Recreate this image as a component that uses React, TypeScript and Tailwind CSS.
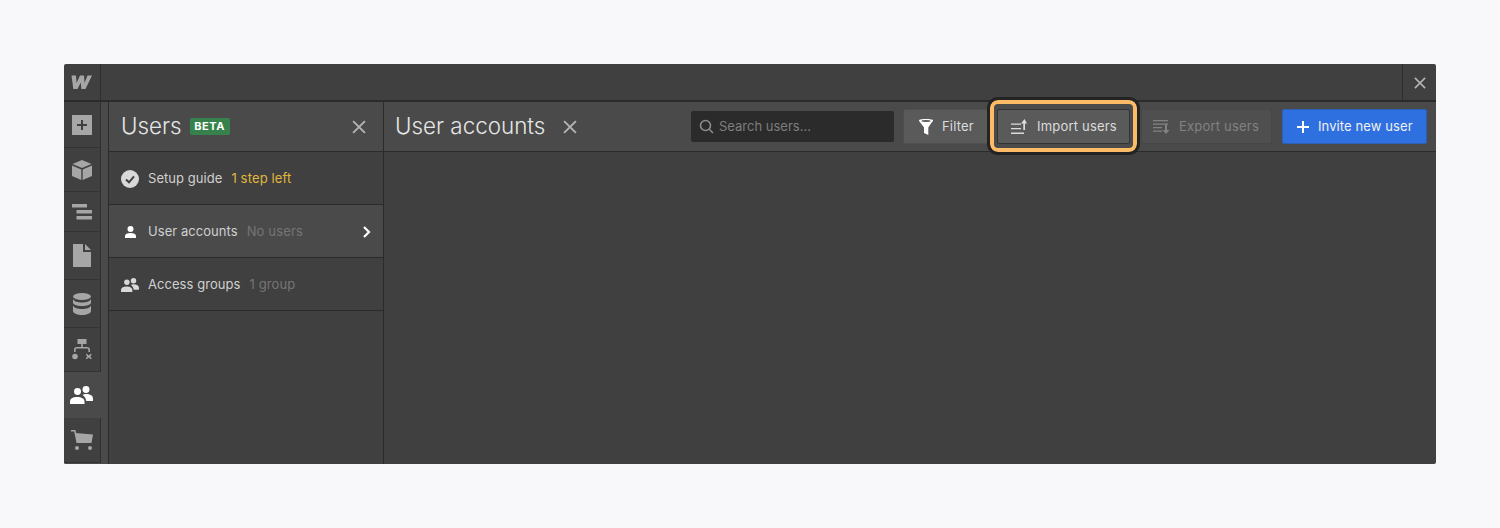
import React from 'react';

const railItems = [
  { h: 'h-[46px]', icon: <PlusBox /> },
  { h: 'h-[44px]', icon: <Cube /> },
  { h: 'h-[40px]', icon: <Navigator /> },
  { h: 'h-[48px]', icon: <Page /> },
  { h: 'h-[48px]', icon: <Database /> },
  { h: 'h-[44px]', icon: <Logic /> },
  { h: 'h-[46px]', icon: <People color="#ffffff" />, active: true },
  { h: 'h-[45px]', icon: <Cart /> },
];

function PlusBox() {
  return (
    <svg width="20" height="20" viewBox="0 0 20 20">
      <path fill="#a6a6a6" d="M0 0h20v20H0z M9 5v4H5v2h4v4h2v-4h4V9h-4V5z" fillRule="evenodd" />
    </svg>
  );
}

function Cube() {
  return (
    <svg width="22" height="22" viewBox="0 0 22 22" fill="#a6a6a6">
      <path d="M11 1l9.500 4-9.500 4-9.500-4z" />
      <path d="M1 6.500l9.300 4V21L1 17z" />
      <path d="M21 6.500l-9.300 4V21l9.300-4z" />
    </svg>
  );
}

function Navigator() {
  return (
    <svg width="20" height="16" viewBox="0 0 20 16" fill="#a6a6a6">
      <path d="M0 0h15v3.500H0z" />
      <path d="M4.500 6h15.500v3.500H4.500z" />
      <path d="M4.500 12h15.500v3.500H4.500z" />
    </svg>
  );
}

function Page() {
  return (
    <svg width="18" height="23" viewBox="0 0 18 23" fill="#a6a6a6">
      <path d="M0 0h10v8h8v15H0z" />
      <path d="M12 0l6 6h-6z" />
    </svg>
  );
}

function Database() {
  return (
    <svg width="18" height="22" viewBox="0 0 18 22" fill="#a6a6a6">
      <ellipse cx="9" cy="3.500" rx="9" ry="3.500" />
      <path d="M0 6c1 2.500 4.500 3.500 9 3.500S17 8.500 18 6v3.500c0 2-4 3.500-9 3.500S0 11.500 0 9.500z" />
      <path d="M0 12.500c1 2.500 4.500 3.500 9 3.500s8-1 9-3.500V18c0 2.200-4 4-9 4s-9-1.800-9-4z" />
    </svg>
  );
}

function Logic() {
  return (
    <svg width="20" height="22" viewBox="0 0 20 22" fill="#a6a6a6">
      <path d="M5.500 0h9v5h-9z" />
      <path d="M9.200 5h1.600v3H15c2 0 3 1.200 3 3v2h-1.600v-2c0-1-.5-1.500-1.500-1.500H5.100c-1 0-1.500.5-1.500 1.500v2H2v-2c0-1.800 1-3 3-3h4.200z" />
      <circle cx="3" cy="17.500" r="2.800" />
      <path d="M14.800 14.800l2 1.600 2-1.600 1 1-1.600 1.700 1.600 1.700-1 1-2-1.600-2 1.600-1-1 1.600-1.700-1.600-1.700z" />
    </svg>
  );
}

function People({ color, size = 23 }: { color: string; size?: number }) {
  return (
    <svg width={size} height={size * 0.78} viewBox="0 0 23 18" fill={color}>
      <circle cx="7.500" cy="5.500" r="3.500" />
      <path d="M0 18v-2.500c0-2.800 2.500-4.500 7-4.500s7.500 1.700 7.500 4.500V18z" />
      <circle cx="16" cy="3.500" r="3.500" />
      <path d="M12.500 9c1-.8 2.200-1 3.700-1 4 0 6.800 1.700 6.800 4.500V15h-6.700c-.4-2.600-1.800-4.700-3.800-6z" />
    </svg>
  );
}

function Cart() {
  return (
    <svg width="22" height="20" viewBox="0 0 22 20" fill="#a6a6a6">
      <path d="M0 0h4.500l2.500 13H5.500L3.200 1.500H0z" />
      <path d="M4.500 3L22 4.500 20.500 13H6.500z" />
      <circle cx="6" cy="18" r="2" />
      <circle cx="19" cy="18" r="2" />
    </svg>
  );
}

function CloseIcon({ size = 13, color = '#b3b3b3' }: { size?: number; color?: string }) {
  return (
    <svg width={size} height={size} viewBox="0 0 13 13" stroke={color} strokeWidth="1.800" fill="none">
      <path d="M1 1l11 11M12 1L1 12" />
    </svg>
  );
}

function Logo() {
  return (
    <svg width="21" height="14" viewBox="0 0 21 14" fill="#a6a6a6">
      <path d="M0.500 0.500H5L5.500 8 9 0.500h4L13.500 8 16.500 0.500H21L14.500 14H10.300L9.800 7.500 6.500 14H2.300z" />
    </svg>
  );
}

function SectionRow({
  icon,
  label,
  note,
  noteClass,
  active,
}: {
  icon: React.ReactNode;
  label: string;
  note: string;
  noteClass: string;
  active?: boolean;
}) {
  return (
    <div
      className={`h-[53px] flex items-center pt-[2px] pl-[12px] pr-[12px] border-b border-[#2b2b2b] ${
        active ? 'bg-[#4a4a4a]' : ''
      }`}
    >
      <div className="w-[18px] flex justify-center shrink-0">{icon}</div>
      <span className="ml-[9px] text-[13px] tracking-[0.05px] text-[#d0d0d0]">{label}</span>
      <span className={`ml-[9px] text-[13px] tracking-[0.15px] ${noteClass}`}>{note}</span>
      {active && (
        <svg className="ml-auto" width="9" height="12" viewBox="0 0 9 12" stroke="#ffffff" strokeWidth="2.200" fill="none">
          <path d="M2 1l5 5-5 5" />
        </svg>
      )}
    </div>
  );
}

export default function App() {
  return (
    <div className="w-[1500px] h-[528px] bg-[#f8f8fa] pt-[64px] px-[64px] font-['Inter',sans-serif] overflow-hidden">
      <div className="w-[1372px] h-[400px] bg-[#404040] rounded-[2px] flex flex-col overflow-hidden">
        {/* Top bar */}
        <div className="h-[38px] shrink-0 flex border-b-2 border-[#2b2b2b]">
          <div className="w-[37px] flex items-center justify-center pr-[1px] border-r border-[#2e2e2e]">
            <Logo />
          </div>
          <div className="flex-1" />
          <div className="w-[34px] flex items-center justify-center pt-[1px] pl-[1px] border-l border-[#2e2e2e]">
            <CloseIcon size={12} />
          </div>
        </div>

        <div className="flex-1 flex min-h-0">
          {/* Icon rail */}
          <div className="w-[45px] shrink-0 flex flex-col bg-[#4a4a4a] border-r border-[#2b2b2b]">
            {railItems.map((item, i) => (
              <div
                key={i}
                className={`${item.h} shrink-0 flex items-center justify-center ${
                  item.active
                    ? 'pr-[9px]'
                    : 'w-[37px] bg-[#404040] border-r border-b border-r-[#2e2e2e] border-b-[#333333]'
                }`}
              >
                {item.icon}
              </div>
            ))}
          </div>

          {/* Users panel */}
          <div className="w-[275px] shrink-0 flex flex-col border-r border-[#2b2b2b]">
            <div className="h-[50px] shrink-0 bg-[#4a4a4a] border-b border-[#2b2b2b] flex items-center pl-[12px] pr-[17px]">
              <span className="text-[22.4px] font-light text-[#e6e6e6] leading-none">Users</span>
              <span className="ml-[8px] w-[40px] h-[17px] rounded-[2px] bg-[#37824c] text-white text-[11px] font-bold tracking-[0.5px] flex items-center justify-center">
                BETA
              </span>
              <div className="ml-auto flex">
                <CloseIcon size={14} />
              </div>
            </div>
            <SectionRow
              icon={
                <svg width="18" height="18" viewBox="0 0 18 18">
                  <circle cx="9" cy="9" r="9" fill="#d9d9d9" />
                  <path d="M5 9.500l3 2.800 5-6" stroke="#404040" strokeWidth="2" fill="none" />
                </svg>
              }
              label="Setup guide"
              note="1 step left"
              noteClass="text-[#e0b73e]"
            />
            <SectionRow
              active
              icon={
                <svg width="11" height="12" viewBox="0 0 11 12" fill="#ffffff">
                  <circle cx="5.500" cy="3" r="3" />
                  <path d="M0 12V10c0-2 2.200-3 5.500-3S11 8 11 10v2z" />
                </svg>
              }
              label="User accounts"
              note="No users"
              noteClass="text-[#757575]"
            />
            <SectionRow
              icon={<People color="#d9d9d9" size={18} />}
              label="Access groups"
              note="1 group"
              noteClass="text-[#757575]"
            />
          </div>

          {/* Main */}
          <div className="flex-1 min-w-0 flex flex-col">
            <div className="h-[50px] shrink-0 bg-[#4a4a4a] border-b border-[#2b2b2b] flex items-center pl-[11px] pr-[9px]">
              <span className="text-[22.4px] font-light text-[#e6e6e6] leading-none">User accounts</span>
              <div className="ml-[18px] flex">
                <CloseIcon size={14} />
              </div>

              <div className="ml-auto w-[203px] h-[31px] rounded-[2px] bg-[#2b2b2b] flex items-center pl-[8px]">
                <svg width="15" height="15" viewBox="0 0 15 15" stroke="#8c8c8c" strokeWidth="1.600" fill="none">
                  <circle cx="6.500" cy="6.500" r="5" />
                  <path d="M10 10l4 4" />
                </svg>
                <span className="ml-[5px] text-[13px] text-[#7d7d7d]">Search users...</span>
              </div>

              <button className="ml-[9px] w-[85px] h-[35px] rounded-[2px] bg-[#5a5a5a] border border-[#4f4f4f] flex items-center pl-[15px] text-[13px] tracking-[0.2px] text-[#dcdcdc]">
                <svg width="14" height="16" viewBox="0 0 14 16" fill="#ffffff">
                  <path d="M0 1.500C0 .5 3 0 7 0s7 .5 7 1.500c0 1-1 1.500-2 3L9.300 8.500V16L5 14V8.500L2 4.500C1 3 0 2.500 0 1.500z" />
                  <ellipse cx="7" cy="2" rx="4.500" ry="0.900" fill="#5a5a5a" />
                </svg>
                <span className="ml-[9px]">Filter</span>
              </button>

              <div className="relative ml-[9px]">
                <button className="w-[133px] h-[35px] rounded-[2px] bg-[#5a5a5a] border border-[#333333] flex items-center pl-[13px] text-[13px] tracking-[0.2px] text-[#dcdcdc]">
                  <svg width="16" height="15" viewBox="0 0 16 15" fill="#dcdcdc">
                    <path d="M0 4.500h10v1.300H0zM0 9h10v1.300H0zM0 13.500h13V15H0z" />
                    <path d="M12.300 11V4.500H10L13.500 0 16 4.500h-2V11z" />
                  </svg>
                  <span className="ml-[10px]">Import users</span>
                </button>
                <div className="absolute -left-[7px] -top-[9px] w-[147px] h-[52px] rounded-[8px] border-[4px] border-[#fcbc67] outline-[3px] outline-[#232323] pointer-events-none" />
              </div>

              <button className="ml-[11px] w-[131px] h-[35px] rounded-[2px] bg-[#4f4f4f] border border-[#474747] flex items-center pl-[11px] text-[13px] tracking-[0.2px] text-[#828282]">
                <svg width="17" height="15" viewBox="0 0 17 15" fill="#828282">
                  <path d="M0 1h15v1.300H0zM0 4.500h15v1.300H0zM0 8h9v1.300H0zM0 11.500h9v1.300H0z" />
                  <path d="M12 5h2v6h2.500L13 15l-3.500-4H12z" />
                </svg>
                <span className="ml-[9px]">Export users</span>
              </button>

              <button className="ml-[10px] w-[145px] h-[35px] rounded-[2px] bg-[#2f70e0] border border-[#2b5fb8] flex items-center pl-[14px] text-[13px] tracking-[0.1px] text-[#f0f0f0]">
                <svg width="12" height="12" viewBox="0 0 12 12" fill="#ffffff">
                  <path d="M5 0h2v5h5v2H7v5H5V7H0V5h5z" />
                </svg>
                <span className="ml-[9px]">Invite new user</span>
              </button>
            </div>
            <div className="flex-1" />
          </div>
        </div>
      </div>
    </div>
  );
}
